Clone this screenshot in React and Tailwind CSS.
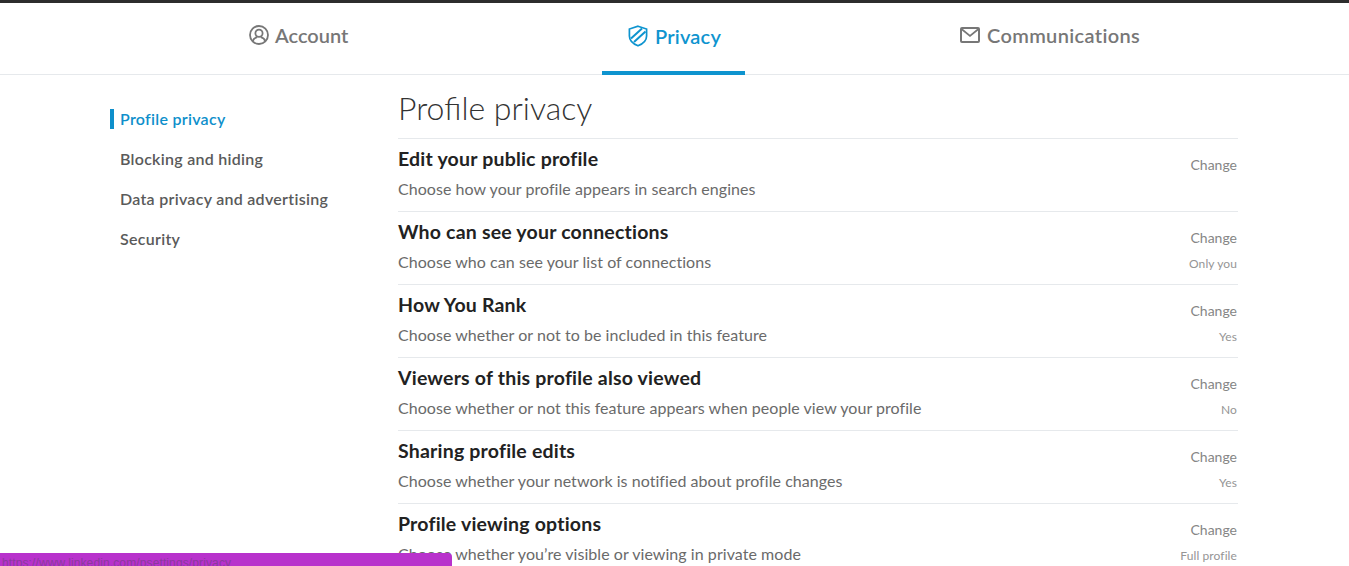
import React from 'react';

const rows = [
  { title: 'Edit your public profile', desc: 'Choose how your profile appears in search engines', value: '' },
  { title: 'Who can see your connections', desc: 'Choose who can see your list of connections', value: 'Only you' },
  { title: 'How You Rank', desc: 'Choose whether or not to be included in this feature', value: 'Yes' },
  { title: 'Viewers of this profile also viewed', desc: 'Choose whether or not this feature appears when people view your profile', value: 'No' },
  { title: 'Sharing profile edits', desc: 'Choose whether your network is notified about profile changes', value: 'Yes' },
  { title: 'Profile viewing options', desc: 'Choose whether you’re visible or viewing in private mode', value: 'Full profile' },
];

const sideItems = ['Blocking and hiding', 'Data privacy and advertising', 'Security'];

const AccountIcon = () => (
  <svg width="20" height="20" viewBox="0 0 20 20" fill="none" stroke="currentColor" strokeWidth="1.8">
    <circle cx="10" cy="10" r="9" />
    <circle cx="10" cy="8.2" r="3.6" />
    <path d="M3.8 16.2c.6-2.6 2.6-3.6 4.4-4M16.2 16.2c-.6-2.6-2.6-3.6-4.4-4" />
  </svg>
);

const ShieldIcon = () => (
  <svg width="20" height="22" viewBox="0 0 20 22" fill="none" stroke="currentColor" strokeWidth="1.7">
    <path d="M10 1.2 L18.6 4 V11 C18.6 15.8 14.6 19 10 20.8 C5.4 19 1.4 15.8 1.4 11 V4 Z" />
    <path d="M3 13.5 L14 3.5 M6 17 L17.5 6.5" strokeWidth="2" />
  </svg>
);

const MailIcon = () => (
  <svg width="20" height="16" viewBox="0 0 20 16" fill="none" stroke="currentColor" strokeWidth="2">
    <rect x="1" y="1" width="18" height="14" rx="1" />
    <path d="M1.5 2 L10 9 L18.5 2" strokeWidth="1.7" />
  </svg>
);

const SettingRow = ({ title, desc, value }) => (
  <div className="h-[73px] border-t border-[#e6e9ec] flex justify-between">
    <div>
      <h3 className="text-[19.5px] leading-[24px] mt-[8px] font-bold tracking-[0.2px] text-[#222]">{title}</h3>
      <p className="text-[16px] leading-[20px] mt-[8px] tracking-[0.05px] text-[#6a6a6a]">{desc}</p>
    </div>
    <div className="text-right pr-[1px]">
      <div className="text-[14px] leading-[18px] mt-[17px] text-[#868686]">Change</div>
      {value && <div className="text-[12px] leading-[16px] mt-[9px] tracking-[0.1px] text-[#959595]">{value}</div>}
    </div>
  </div>
);

export default function App() {
  return (
    <div className="relative h-[566px] overflow-hidden bg-white border-t-[3px] border-[#2d2d2d] font-['Source_Sans_Pro','Lato',sans-serif]">
      {/* Tabs */}
      <nav className="h-[72px] border-b border-[#e6e9ec] flex text-[20px] font-semibold text-[#777]">
        <div className="ml-[249px] w-[353px] flex items-center gap-[6px] pb-[7px]">
          <AccountIcon />
          <span>Account</span>
        </div>
        <div className="w-[143px] h-[72px] border-b-[4px] border-[#0e94cf] flex items-center justify-center gap-[7px] pb-[3px] pl-[2px] text-[#0e94cf]">
          <ShieldIcon />
          <span className="tracking-[0.2px]">Privacy</span>
        </div>
        <div className="ml-[215px] flex items-center gap-[7px] pb-[7px]">
          <MailIcon />
          <span className="tracking-[0.35px]">Communications</span>
        </div>
      </nav>

      <div className="flex pl-[110px]">
        {/* Sidebar */}
        <aside className="w-[288px] pt-[34px] text-[16px] font-semibold tracking-[0.28px] text-[#5a5a5a]">
          <div className="h-[20px] border-l-[4px] border-[#0e8fcb] pl-[6px] leading-[20px] text-[#0e8fcb]">Profile privacy</div>
          {sideItems.map((item) => (
            <div key={item} className="h-[20px] mt-[20px] pl-[10px] leading-[20px]">{item}</div>
          ))}
        </aside>

        {/* Main */}
        <main className="w-[840px]">
          <h1 className="h-[63px] pt-[13px] text-[32px] leading-[40px] font-light text-[#333]">Profile privacy</h1>
          {rows.map((row) => (
            <SettingRow key={row.title} {...row} />
          ))}
        </main>
      </div>

      {/* Browser status bubble */}
      <div className="absolute left-0 bottom-0 w-[452px] h-[13px] bg-[#b832cc] rounded-tr-[4px] overflow-hidden pl-[2px] text-[12px] leading-[21px] tracking-[0.12px] text-[#8a3a9c] font-['Liberation_Sans',sans-serif]">
        https://www.linkedin.com/psettings/privacy
      </div>
    </div>
  );
}
